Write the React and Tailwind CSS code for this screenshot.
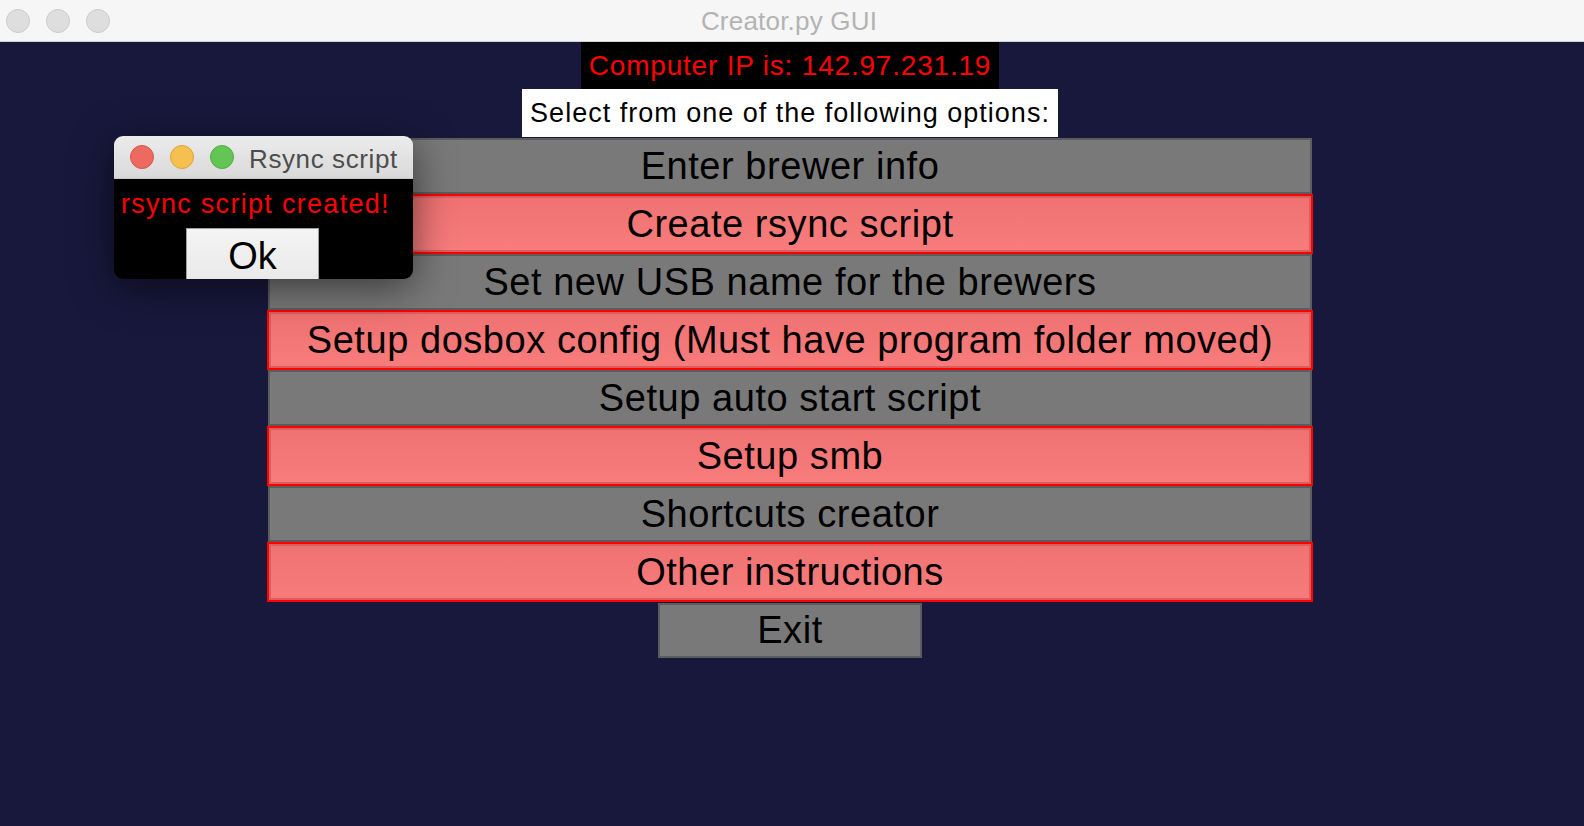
import React from "react";

const rows = [
  { label: "Enter brewer info", red: false },
  { label: "Create rsync script", red: true },
  { label: "Set new USB name for the brewers", red: false },
  { label: "Setup dosbox config (Must have program folder moved)", red: true },
  { label: "Setup auto start script", red: false },
  { label: "Setup smb", red: true },
  { label: "Shortcuts creator", red: false },
  { label: "Other instructions", red: true },
];

function Light({ cls }) {
  return <span className={`block w-[24px] h-[24px] rounded-full ${cls}`} />;
}

export default function App() {
  return (
    <div className="w-[1584px] h-[826px] flex flex-col overflow-hidden font-['Liberation_Sans',Arial,sans-serif] relative">
      {/* Window title bar */}
      <div className="h-[42px] shrink-0 bg-[#f6f6f6] border-b border-[#d2d2d2] flex items-center relative">
        <div className="flex items-center gap-[16px] pl-[6px]">
          <Light cls="bg-[#dedede] border border-[#cbcbcb]" />
          <Light cls="bg-[#dedede] border border-[#cbcbcb]" />
          <Light cls="bg-[#dedede] border border-[#cbcbcb]" />
        </div>
        <div className="absolute inset-0 flex items-center justify-center pr-[6px]">
          <span className="text-[26px] tracking-[0.2px] text-[#b3b3b3] leading-none">Creator.py GUI</span>
        </div>
      </div>

      {/* Main content */}
      <div className="flex-1 bg-[#18183c] flex flex-col items-center pr-[4px]">
        <div className="h-[47px] w-[418px] bg-black text-[#ff0000] text-[28px] tracking-[0.8px] flex items-center justify-center whitespace-nowrap">
          Computer IP is: 142.97.231.19
        </div>
        <div className="h-[48px] w-[536px] bg-white text-black text-[27px] tracking-[1px] flex items-center justify-center whitespace-nowrap">
          Select from one of the following options:
        </div>
        <div className="mt-[1px] flex flex-col items-center">
          {rows.map((r) =>
            r.red ? (
              <div
                key={r.label}
                className="h-[60px] w-[1046px] border-2 border-[#ff0000] bg-[#f57878]"
              >
                <div className="h-full w-full border-2 border-[#d95f5f] bg-gradient-to-b from-[#f07272] to-[#f87c7c] flex items-center justify-center text-[38px] tracking-[0.55px] text-black whitespace-nowrap">
                  {r.label}
                </div>
              </div>
            ) : (
              <div
                key={r.label}
                className="h-[56px] w-[1044px] border-2 border-[#5c5c5c] bg-[#797979] flex items-center justify-center text-[38px] tracking-[0.55px] text-black whitespace-nowrap"
              >
                {r.label}
              </div>
            )
          )}
          <div className="mt-[1px] h-[55px] w-[264px] border-2 border-[#5c5c5c] bg-[#797979] flex items-center justify-center text-[38px] tracking-[0.55px] text-black">
            Exit
          </div>
        </div>
      </div>

      {/* Popup window */}
      <div className="absolute left-[114px] top-[136px] w-[299px] h-[143px] rounded-[9px] overflow-hidden flex flex-col shadow-[0_8px_40px_rgba(0,0,0,0.55)]">
        <div className="h-[43px] shrink-0 bg-gradient-to-b from-[#ececec] to-[#d9d9d9] border-b border-[#c4c4c4] flex items-center pl-[16px]">
          <div className="flex items-center gap-[16px]">
            <Light cls="bg-[#ec6a5f] border border-[#d85549]" />
            <Light cls="bg-[#f5c04f] border border-[#dea236]" />
            <Light cls="bg-[#62c554] border border-[#4fae3f]" />
          </div>
          <span className="ml-[15px] pt-[4px] text-[26px] tracking-[0.6px] text-[#4d4d4d] leading-none whitespace-nowrap">Rsync script</span>
        </div>
        <div className="flex-1 bg-black flex flex-col">
          <div className="h-[44px] pt-[6px] flex items-center pl-[7px] text-[27px] tracking-[1.3px] text-[#ff0000] whitespace-nowrap">
            rsync script created!
          </div>
          <div className="pl-[72px] pt-[5px]">
            <div className="h-[60px] w-[133px] border border-[#9e9e9e] bg-gradient-to-b from-[#f4f4f4] to-[#e8e8e8] flex items-start justify-center pt-[4px] text-[38px] text-black leading-[46px]">
              Ok
            </div>
          </div>
        </div>
      </div>
    </div>
  );
}
